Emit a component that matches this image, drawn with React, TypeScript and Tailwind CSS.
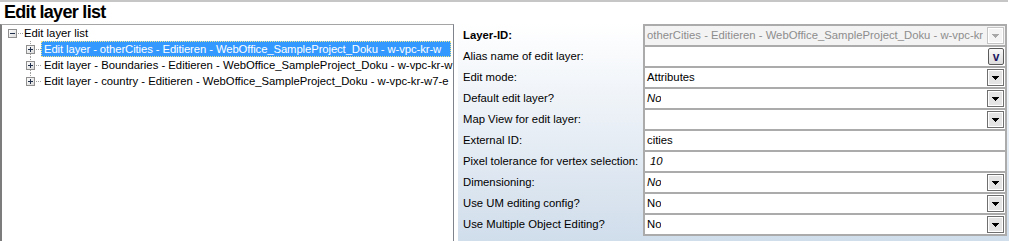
import React from "react";

type Row = {
  label: string;
  bold?: boolean;
  value: string;
  italic?: boolean;
  kind: "disabled" | "v" | "drop" | "none";
  indent?: boolean;
};

const rows: Row[] = [
  { label: "Layer-ID:", bold: true, value: "otherCities - Editieren - WebOffice_SampleProject_Doku - w-vpc-kr", kind: "disabled" },
  { label: "Alias name of edit layer:", value: "", kind: "v" },
  { label: "Edit mode:", value: "Attributes", kind: "drop" },
  { label: "Default edit layer?", value: "No", italic: true, kind: "drop" },
  { label: "Map View for edit layer:", value: "", kind: "drop" },
  { label: "External ID:", value: "cities", kind: "none" },
  { label: "Pixel tolerance for vertex selection:", value: "10", italic: true, kind: "none", indent: true },
  { label: "Dimensioning:", value: "No", italic: true, kind: "drop" },
  { label: "Use UM editing config?", value: "No", kind: "drop" },
  { label: "Use Multiple Object Editing?", value: "No", kind: "drop" },
];

function DropButton({ disabled }: { disabled?: boolean }) {
  const border = disabled ? "#c4c4c4" : "#6f6f6f";
  const fill = disabled ? "#f4f4f4" : "#e4e4e4";
  const tri = disabled ? "#a8a8a8" : "#000000";
  return (
    <svg width="17" height="17" viewBox="0 0 17 17" className="shrink-0">
      <rect x="0.5" y="0.5" width="16" height="16" fill={fill} stroke={border} />
      <rect x="1.5" y="1.5" width="14" height="14" fill="none" stroke="#ffffff" />
      <rect x="5" y="7" width="7" height="1" fill={tri} />
      <rect x="6" y="8" width="5" height="1" fill={tri} />
      <rect x="7" y="9" width="3" height="1" fill={tri} />
      <rect x="8" y="10" width="1" height="1" fill={tri} />
    </svg>
  );
}

function VButton() {
  return (
    <div className="w-[16px] h-[17px] shrink-0 rounded-[2px] border border-[#5a5a5a] bg-linear-to-b from-[#fafafa] to-[#dcdcdc] flex items-center justify-center text-[12px] font-bold leading-none text-[#1d1660]">
      v
    </div>
  );
}

function Box({ plus }: { plus?: boolean }) {
  return (
    <svg width="9" height="9" viewBox="0 0 9 9" className="shrink-0">
      <defs>
        <linearGradient id={plus ? "gp" : "gm"} x1="0" y1="0" x2="1" y2="1">
          <stop offset="0" stopColor="#ffffff" />
          <stop offset="1" stopColor="#d8d8d8" />
        </linearGradient>
      </defs>
      <rect x="0.5" y="0.5" width="8" height="8" fill={`url(#${plus ? "gp" : "gm"})`} stroke="#8f8f8f" />
      <rect x="2" y="4" width="5" height="1" fill="#20304c" />
      {plus && <rect x="4" y="2" width="1" height="5" fill="#20304c" />}
    </svg>
  );
}

function Dots({ w }: { w: number }) {
  const items = [];
  for (let i = 0; i < w; i += 2) items.push(<rect key={i} x={i} y="0" width="1" height="1" fill="#a0a0a0" />);
  return (
    <svg width={w} height="1" className="shrink-0">
      {items}
    </svg>
  );
}

function ChildRow({ text, selected, last }: { text: string; selected?: boolean; last?: boolean }) {
  return (
    <div className="h-[16px] flex items-center relative">
      <svg width="40" height="16" className="absolute left-0 top-0">
        {[0, 2].map((y) => (
          <rect key={"a" + y} x="28" y={y} width="1" height="1" fill="#a0a0a0" />
        ))}
        {!last && [13, 15].map((y) => <rect key={"b" + y} x="28" y={y} width="1" height="1" fill="#a0a0a0" />)}
      </svg>
      <div className="w-[24px] shrink-0" />
      <Box plus />
      <div className="w-[1px] shrink-0" />
      <Dots w={5} />
      <div
        className={
          selected
            ? "h-[16px] w-[410px] shrink-0 overflow-hidden bg-[#3399ff] text-white tracking-[-0.1px] outline outline-1 outline-dotted outline-[#f0e68c] -outline-offset-1 pl-[3px] flex items-center whitespace-nowrap"
            : "h-[16px] pl-[3px] flex items-center whitespace-nowrap text-black"
        }
      >
        {text}
      </div>
    </div>
  );
}

export default function App() {
  return (
    <div className="w-[1009px] h-[241px] bg-white overflow-hidden font-['Liberation_Sans',Arial,sans-serif] text-[11.3px] text-black">
      <div className="h-[2px] w-[1008px] border-t-2 border-r-2 border-[#c6c6c6]" />
      <div className="h-[22px] pl-[4px] text-[18px] leading-[21px] font-bold tracking-[-0.7px] text-black">
        Edit layer list
      </div>
      <div className="flex h-[217px]">
        <div className="w-[454px] h-full overflow-hidden border-l-2 border-l-[#7c7c7c] border-t border-t-[#a5a5a5] border-r border-r-[#7f838b]">
          <div className="h-[16px] flex items-center">
            <div className="w-[6px] shrink-0" />
            <Box />
            <div className="w-[1px] shrink-0" />
            <Dots w={5} />
            <div className="pl-[1px] whitespace-nowrap">Edit layer list</div>
          </div>
          <ChildRow selected text="Edit layer - otherCities - Editieren - WebOffice_SampleProject_Doku - w-vpc-kr-w" />
          <ChildRow text="Edit layer - Boundaries - Editieren - WebOffice_SampleProject_Doku - w-vpc-kr-w" />
          <ChildRow last text="Edit layer - country - Editieren - WebOffice_SampleProject_Doku - w-vpc-kr-w7-e" />
        </div>
        <div className="w-[4px]" />
        <div className="flex-1 h-full bg-linear-to-b from-white to-[#d0ddeb]">
          {rows.map((r, i) => (
            <div key={i} className="flex h-[21px]">
              <div
                className={
                  "w-[185px] pl-[5px] pt-[2px] flex items-center whitespace-nowrap " + (r.bold ? "font-bold" : "")
                }
              >
                {r.label}
              </div>
              <div
                className={
                  "w-[364px] border-l-2 border-r-2 border-t-2 border-[#ababab] flex items-center justify-between pr-[1px] " +
                  (i === rows.length - 1 ? "h-[23px] border-b-2 " : "h-[21px] ") +
                  (r.kind === "disabled" ? "bg-[#f3f3f3]" : "bg-white")
                }
              >
                <span
                  className={
                    "whitespace-nowrap overflow-hidden " +
                    (r.indent ? "pl-[5px] " : "pl-[2px] ") +
                    (r.italic ? "italic " : "") +
                    (r.kind === "disabled" ? "text-[#8d8d8d]" : "text-black")
                  }
                >
                  {r.value}
                </span>
                {r.kind === "drop" && <DropButton />}
                {r.kind === "disabled" && <DropButton disabled />}
                {r.kind === "v" && <VButton />}
              </div>
            </div>
          ))}
        </div>
      </div>
    </div>
  );
}
